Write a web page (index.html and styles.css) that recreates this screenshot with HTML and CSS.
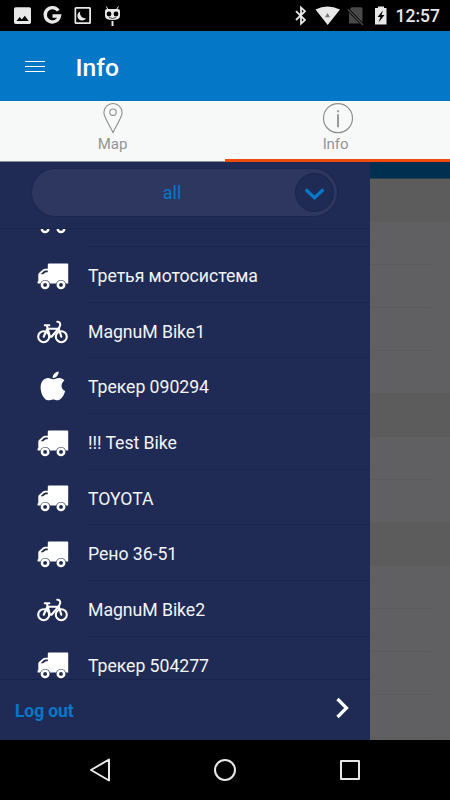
FILE: index.html
```html
<!DOCTYPE html>
<html lang="en">
<head>
<meta charset="utf-8">
<title>Info</title>
<link rel="stylesheet" href="styles.css">
</head>
<body>
<svg width="0" height="0" class="defs">
  <symbol id="truck" viewBox="0 0 32 27">
    <path fill="#fff" fill-rule="evenodd" d="M12 .5h18.500q.7 0 .7.7V20.500h-2.400a5 5 0 0 0-9.600 0h-6.200a5 5 0 0 0-9.600 0H.6V18.300h.7v-6.800Q1.300 10.700 2 10l4-3.500q.9-.8 2-.8h2.800V1.500q0-1 1.200-1zM3.600 11.300 7 8.100q.7-.6 1.500-.6h2.300v1.700H9.200q-.7 0-1.200.5l-1.800 1.600z"/>
    <g fill="none" stroke="#fff" stroke-width="2.500"><circle cx="8.100" cy="21.900" r="3.200"/><circle cx="24" cy="21.900" r="3.200"/></g>
  </symbol>
  <symbol id="bike" viewBox="0 0 32 24">
    <g fill="none" stroke="#fff" stroke-width="2.100" stroke-linecap="round" stroke-linejoin="round"><circle cx="6.700" cy="16.700" r="5.500"/><circle cx="24.300" cy="16.700" r="5.500"/><path d="M6.700 16.700 10.300 8.700H21.500L14.500 16.700H13L9.800 5.500M7.800 5.300h4.500M24.300 16.700 21.700 8.200 22.300 7.300Q24 5 22.900 3 22.300 1.700 20.300 1.800"/></g>
  </symbol>
  <symbol id="apple" viewBox="0 0 26 30">
    <path fill="#fff" d="M18.600.4C18.900 3.900 16.300 6.900 12.600 7.100 12.600 3.700 15 1.100 18.600.4zM12.900 8.300c1.700 0 3.300-1.400 6.200-1.400 2.400 0 4.200 1.100 5.300 2.600-4.200 3-3.600 8.600.8 10.600-1.200 4.200-3.900 8.900-7.500 9.200-1.800 0-2.800-.8-4.700-.8s-3.200.9-4.900.8C4.300 29.100.6 22.500.6 16.400c0-6 3.600-9.300 7.400-9.400 2.100 0 3.700 1.300 4.900 1.300z"/>
  </symbol>
</svg>
<div class="screen">
  <header class="status">
    <svg width="450" height="31" viewBox="0 0 450 31">
      <g fill="#e8e8e8">
        <path fill-rule="evenodd" d="M15.700 7.300h13.600q1.700 0 1.700 1.700v13.300q0 1.700-1.700 1.700H15.700Q14 24 14 22.300V9q0-1.700 1.700-1.700zM16.500 21h12.200l-3.900-5.200-3 3.800-2.100-2.500z"/>
        <path fill-rule="evenodd" d="M76 7h13.500Q91 7 91 8.500v14q0 1.500-1.500 1.500H76q-1.500 0-1.500-1.500v-14Q74.500 7 76 7zM76.200 8.800v13.400h13V8.800z"/>
        <path d="M77.500 10h10.500v11H77.500z" fill="#000"/>
        <path d="M80.200 11.500a4.700 4.700 0 1 0 6 6.500 5 5 0 0 1-6-6.500z"/>
        <path d="M108 9.500 106.200 6.500M116.500 9.500 118.500 6.500" stroke="#e8e8e8"/>
        <path d="M107 9h10.800q2.200 0 2.200 2.200v4.500Q120 20 112.500 20T105 15.700v-4.500Q105 9 107 9z"/>
        <path d="M111.500 21h2v5h-2z"/>
        <path d="M315.500 9.500q11.800-6 24.500 0l-12.300 15.500z"/>
        <path d="M375 8h3V6.500h6V8h2.500v16.500H375z"/>
      </g>
      <path d="M58.300 10.600A7.200 7.200 0 1 0 59.500 16H52.500" fill="none" stroke="#e8e8e8" stroke-width="3.300"/>
      <g fill="#000"><circle cx="109" cy="14" r="2.400"/><circle cx="116" cy="14" r="2.400"/></g>
      <path d="M109 17.500q3.500 2 7 0" fill="none" stroke="#000" stroke-width=".7"/>
      <path d="M296 11.200 305 20 301 23.700V7.500L305 11.200 296 20" fill="none" stroke="#e8e8e8" stroke-width="1.800"/>
      <path d="M325 17.300 327.500 13l2.500 4.300z" fill="#777"/>
      <path d="M351.500 7.200H361q1.500 0 1.500 1.500V23.500H349V10z" fill="#494949"/>
      <path d="M348 9.500 363 25" stroke="#000" stroke-width="3"/>
      <path d="M348 9.500 363 25" stroke="#494949" stroke-width="1.500"/>
      <path d="M383 10.500 377.500 17h3L378.500 22.500 384.500 15h-3z" fill="#000"/>
    </svg>
    <span class="clock">12:57</span>
  </header>
  <div class="appbar">
    <div class="burger"><i></i><i></i><i></i></div>
    <h1>Info</h1>
  </div>
  <nav class="tabs">
    <div class="tab">
      <svg width="32" height="32" viewBox="0 0 32 32" fill="none" stroke="#8d8e8e" stroke-width="1.100"><path d="M16 30.500C13 23.500 6.900 15.700 6.900 10.600a9.100 9.100 0 0 1 18.200 0C25.100 15.700 19 23.500 16 30.500z"/><circle cx="16" cy="10.200" r="3.200"/></svg>
      <span>Map</span>
    </div>
    <div class="tab active">
      <svg width="32" height="32" viewBox="0 0 32 32" fill="none" stroke="#8d8e8e" stroke-width="1.200"><circle cx="16" cy="16.200" r="14.500"/><path d="M16 12.200v13M16 8.200v2" stroke-width="1.800"/></svg>
      <span>Info</span>
    </div>
  </nav>
  <main class="content">
    <aside class="drawer">
      <div class="filter">
        <div class="select"><span>all</span>
          <div class="knob"><svg width="22" height="14" viewBox="0 0 22 14"><path d="M1.700 2.500 10.500 10.700 19.300 2.500" fill="none" stroke="#0678c9" stroke-width="3.200"/></svg></div>
        </div>
      </div>
      <ul class="list">
        <li><svg class="truck"><use href="#truck"/></svg><span></span></li>
        <li><svg class="truck"><use href="#truck"/></svg><span>Третья мотосистема</span></li>
        <li><svg class="bike"><use href="#bike"/></svg><span>MagnuM Bike1</span></li>
        <li><svg class="apple"><use href="#apple"/></svg><span>Трекер 090294</span></li>
        <li><svg class="truck"><use href="#truck"/></svg><span>!!! Test Bike</span></li>
        <li><svg class="truck"><use href="#truck"/></svg><span>TOYOTA</span></li>
        <li><svg class="truck"><use href="#truck"/></svg><span>Рено 36-51</span></li>
        <li><svg class="bike"><use href="#bike"/></svg><span>MagnuM Bike2</span></li>
        <li><svg class="truck"><use href="#truck"/></svg><span>Трекер 504277</span></li>
      </ul>
      <div class="logout"><span>Log out</span><svg width="16" height="24" viewBox="0 0 16 24"><path d="M2.500 3 11.500 12 2.500 21" fill="none" stroke="#fff" stroke-width="3.200"/></svg></div>
    </aside>
    <div class="behind">
      <div class="strip"></div>
      <div class="sec first"></div>
      <div class="row"></div><div class="row"></div><div class="row"></div><div class="row last"></div>
      <div class="sec"></div>
      <div class="row"></div><div class="row last"></div>
      <div class="sec"></div>
      <div class="row"></div><div class="row"></div><div class="row"></div><div class="row"></div>
    </div>
  </main>
  <footer class="navbar">
    <svg width="450" height="60" viewBox="0 0 450 60" fill="none" stroke="#e8e8e8" stroke-width="2" stroke-linejoin="round"><path d="M109 19.500v21L91 30z"/><circle cx="225" cy="30" r="10"/><path d="M341 21h18v18h-18z"/></svg>
  </footer>
</div>
</body>
</html>
```

FILE: styles.css
```css
* { box-sizing: border-box; }
body { margin: 0; font-family: Roboto, "Liberation Sans", sans-serif; background: #000; }
svg { display: block; flex: none; }
.defs { position: absolute; }
.screen { width: 450px; height: 800px; display: flex; flex-direction: column; overflow: hidden; }
.status { height: 31px; flex: none; background: #000; position: relative; }
.clock { position: absolute; right: 10px; top: 6px; font-size: 17.5px; line-height: 21px; font-weight: 500; color: #e8e8e8; }
.appbar { height: 70px; flex: none; background: #0477c7; display: flex; align-items: center; padding: 1px 0 0 25px; }
.burger { width: 20px; display: flex; flex-direction: column; gap: 4px; padding-bottom: 1px; }
.burger i { height: 1px; background: #fff; }
.appbar h1 { margin: 3px 0 0 30.5px; font-size: 24.7px; line-height: 30px; font-weight: 500; color: #fff; }
.tabs { height: 61px; flex: none; display: flex; background: #f7f9f8; border-bottom: 1px solid #8b8d94; }
.tab { flex: 1; display: flex; flex-direction: column; align-items: center; padding-top: 1px; height: 61px; color: #939494; font-size: 15px; }
.tab span { line-height: 18px; margin-top: 1px; }
.tab.active { border-bottom: 3px solid #f04a0c; }
.tab.active span { margin-left: -4px; letter-spacing: -.1px; }
.content { height: 578px; flex: none; display: flex; overflow: hidden; }
.drawer { width: 370px; flex: none; background: #202b55; display: flex; flex-direction: column; }
.filter { height: 67px; flex: none; padding: 7px 32px 0; border-bottom: 1px solid #1b254b; }
.select { height: 47px; width: 305px; border-radius: 24px; background: #2e375f; box-shadow: 0 0 0 1px #1d264f; display: flex; align-items: center; justify-content: flex-end; padding-right: 3px; color: #0678c9; font-size: 18px; }
.select span { flex: 1; text-align: center; padding-left: 17px; }
.knob { width: 39px; height: 39px; border-radius: 50%; background: #202b55; border: 1px solid #19234a; display: flex; align-items: center; justify-content: center; padding-top: 2px; }
.list { list-style: none; margin: 0; padding: 0; height: 450px; flex: none; overflow: hidden; }
.list li { height: 55.65px; display: grid; grid-template-columns: 88px 1fr; grid-template-rows: 55.65px; align-items: center; }
.list li:first-child { margin-top: -37.6px; }
.list li svg { justify-self: center; margin-left: 18px; }
.truck { width: 32px; height: 27px; margin-top: 3px; }
.bike { width: 32px; height: 24px; margin-top: 2px; }
.apple { width: 26px; height: 30px; }
.list li span { height: 100%; line-height: 59px; font-size: 17.7px; letter-spacing: -.06px; color: #f2f4f8; border-bottom: 1px solid #1b254b; }
.logout { flex: 1; border-top: 1px solid #19234a; display: flex; align-items: center; justify-content: space-between; padding: 0 19px 0 15px; color: #0678c9; font-size: 17.5px; font-weight: 700; }
.logout span { margin-top: 1px; letter-spacing: -.1px; }
.logout svg { margin-top: -4px; }
.behind { flex: 1; background: #606062; }
.strip { height: 17px; background: #002f4f; border-bottom: 1px solid #29404d; }
.sec { height: 44px; background: #5c5c5c; }
.sec.first { height: 43px; }
.row { height: 43px; background: linear-gradient(90deg, #5b5b5b 61px, #5f5f5f 61px) bottom / 100% 1px no-repeat; }
.row.last { height: 42px; background: none; }
.navbar { height: 60px; flex: none; background: #000; }
```
